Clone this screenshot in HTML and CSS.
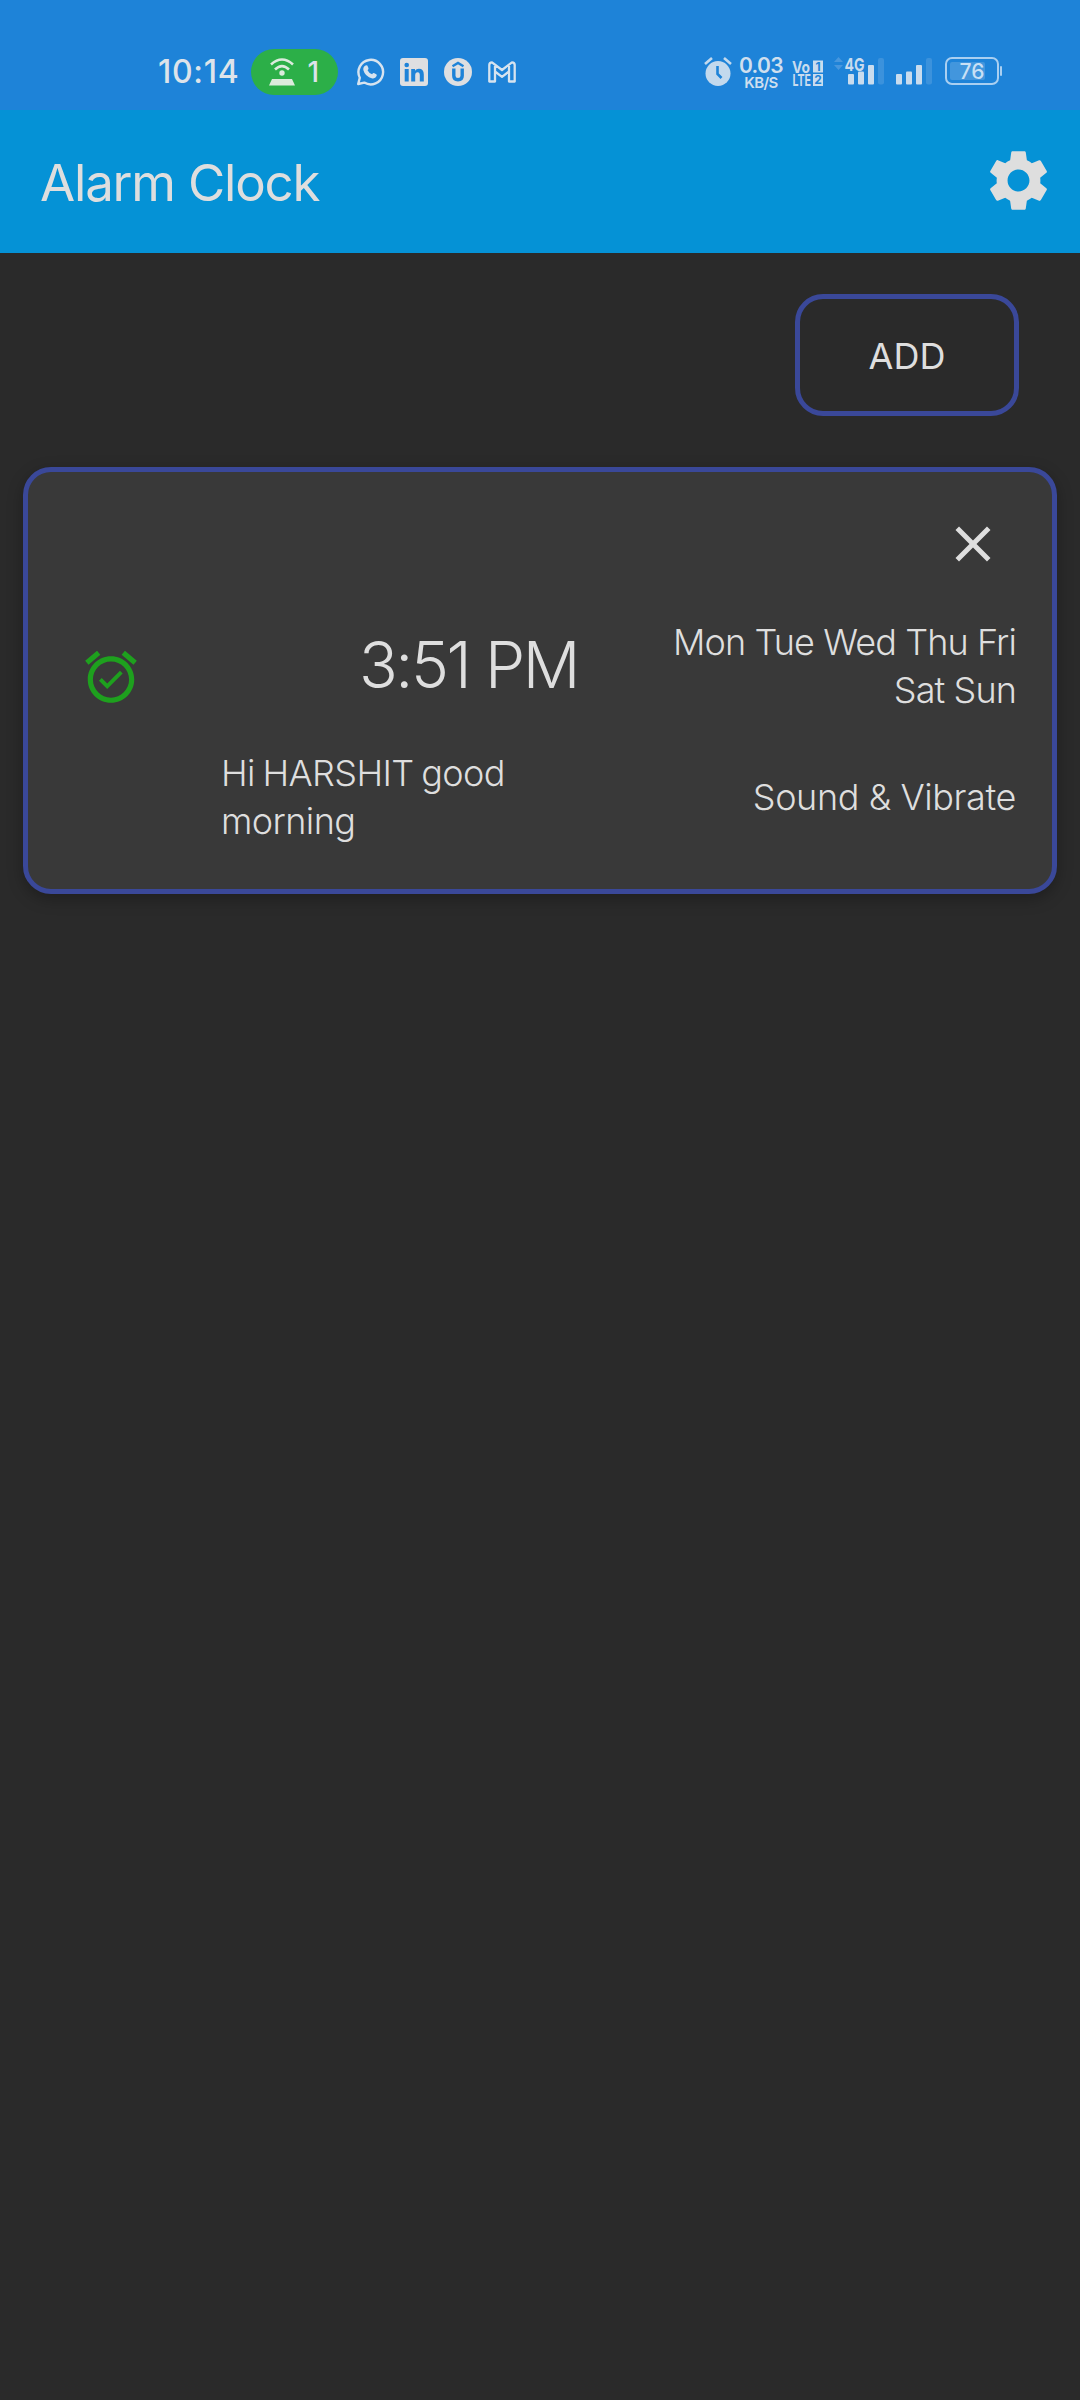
FILE: index.html
```html
<!DOCTYPE html>
<html lang="en">
<head>
<meta charset="utf-8">
<title>Alarm Clock</title>
<link rel="stylesheet" href="styles.css">
</head>
<body>
<div class="status">
  <span class="clock">10:14</span>
  <div class="hotspot">
    <svg width="26" height="28" viewBox="0 0 26 28" fill="none" stroke="#dcebdd" stroke-width="2.6"><path d="M2 6.5Q13-3.5 24 6.5M6 11.5Q13 4.8 20 11.5"/><circle cx="13" cy="15" r="2.7" fill="#dcebdd" stroke="none"/><path d="M3 21h20l3 6.500H0z" fill="#dcebdd" stroke="none"/></svg>
    <span>1</span>
  </div>
  <div class="apps">
    <svg width="28" height="28" viewBox="0 0 28 28"><path d="M2.2 26l1.6-6.3A12.3 12.3 0 1 1 8.300 24.600z" fill="none" stroke="#d6e3ef" stroke-width="2.4" stroke-linejoin="round"/><path d="M9.500 7.500q1.800-.7 2.300.9l.7 1.800q.2.900-1 2 1.500 2.900 4.600 4.100 1-1.500 1.800-1.200l2.400 1.200q.8.500.3 1.800-1.200 2.800-4.300 2.300-7.200-1.800-9-8.500-.3-3.300 2.200-4.400z" fill="#d6e3ef"/></svg>
    <svg width="28" height="28" viewBox="0 0 28 28"><rect width="28" height="28" rx="3" fill="#dedfe1"/><g fill="#1e83d8"><circle cx="6.700" cy="7" r="2.300"/><path d="M4.700 11h4v12.500h-4zM11.200 11H15v1.700q1.200-2 3.900-2 4.900 0 4.900 5.800v7h-4v-6.300q0-3-2.100-3-2.500 0-2.500 3v6.300h-4z"/></g></svg>
    <svg width="28" height="28" viewBox="0 0 28 28"><circle cx="14" cy="14" r="14" fill="#dedfe1"/><path d="M8.500 8.200L14 5l5.500 3.200" fill="none" stroke="#1e83d8" stroke-width="2.400"/><path d="M9.800 10.500v7.300q0 4 4.200 4t4.200-4v-7.300" fill="none" stroke="#1e83d8" stroke-width="3.400"/></svg>
    <svg width="28" height="22" viewBox="0 0 28 22"><path d="M1.300 20.500V4Q1.300 1.300 4 1.300L14 9l10-7.700q2.700 0 2.700 2.700v16.500H21V10.500L14 15.800 7 10.500v10zM7 10.500V5M21 10.500V5" fill="none" stroke="#d6e3ef" stroke-width="2.300" stroke-linejoin="round"/></svg>
  </div>
  <div class="system">
    <svg class="alarm-set" width="28" height="30" viewBox="0 0 28 30"><circle cx="14" cy="17.500" r="12.500" fill="#c3d9ed"/><path d="M1 8L8 2M27 8L20 2" stroke="#c3d9ed" stroke-width="2.600"/><path d="M13.500 10v8l4 4" fill="none" stroke="#1e83d8" stroke-width="2.600"/></svg>
    <div class="speed"><b>0.03</b><span>KB/S</span></div>
    <svg class="volte" width="32" height="28" viewBox="0 0 32 28"><text x="0" y="12.500" textLength="18" lengthAdjust="spacingAndGlyphs">Vo</text><text x="0.500" y="26" textLength="18.500" lengthAdjust="spacingAndGlyphs">LTE</text><path d="M21 0.500h10v12H21zM21 14h10v12H21z"/><text x="26" y="10.800" class="slot" text-anchor="middle">1</text><text x="26" y="24.300" class="slot" text-anchor="middle">2</text></svg>
    <svg class="cell" width="52" height="30" viewBox="0 0 52 30"><path d="M0 6l4.500-5L9 6zM0 9h9l-4.500 5z" fill="#4797de"/><text x="10.500" y="14.500" class="net" textLength="20" lengthAdjust="spacingAndGlyphs">4G</text><g fill="#c9dcee"><rect x="14" y="18" width="6" height="10.500" rx="1"/><rect x="24" y="15.500" width="6" height="13" rx="1"/><rect x="34" y="9" width="6" height="19.500" rx="1"/></g><rect x="44" y="2" width="6" height="26.500" rx="2" fill="#3b92dc"/></svg>
    <svg class="cell2" width="38" height="30" viewBox="0 0 38 30"><g fill="#c9dcee"><rect x="0" y="18" width="6" height="10.500" rx="1"/><rect x="10" y="15.500" width="6" height="13" rx="1"/><rect x="20" y="9" width="6" height="19.500" rx="1"/></g><rect x="30" y="2" width="6" height="26.500" rx="2" fill="#3b92dc"/></svg>
    <svg class="battery" width="58" height="28" viewBox="0 0 58 28"><rect x="1" y="1" width="52" height="26" rx="6" fill="none" stroke="#a9cff1" stroke-width="2"/><rect x="5" y="5" width="35" height="18" rx="2" fill="#4296dd"/><rect x="55" y="9" width="2" height="10" rx="1" fill="#a9cff1"/><text x="27" y="21.500" class="level" text-anchor="middle">76</text></svg>
  </div>
</div>
<header class="appbar">
  <h1>Alarm Clock</h1>
  <svg width="73" height="73" viewBox="0 0 24 24" fill="#dedede"><path d="M19.140 12.940c.04-.3.060-.61.060-.94 0-.32-.02-.64-.07-.94l2.030-1.580c.18-.14.230-.41.120-.61l-1.920-3.320c-.12-.22-.37-.29-.59-.22l-2.390.96c-.5-.38-1.030-.7-1.620-.94l-.36-2.540c-.04-.24-.24-.41-.48-.41h-3.840c-.24 0-.43.170-.47.410l-.36 2.540c-.59.240-1.130.570-1.620.940l-2.390-.96c-.22-.08-.47 0-.59.220L2.740 8.870c-.12.210-.08.470.12.610l2.030 1.580c-.05.300-.09.630-.09.940s.020.640.070.940l-2.030 1.580c-.18.140-.23.410-.12.610l1.920 3.320c.12.220.370.290.590.220l2.390-.96c.5.380 1.030.700 1.620.940l.36 2.540c.05.240.240.410.480.410h3.840c.24 0 .44-.17.470-.41l.36-2.540c.59-.24 1.130-.56 1.620-.94l2.390.96c.22.080.470 0 .59-.22l1.920-3.320c.12-.22.070-.47-.12-.61l-2.010-1.580zM12 15.600c-1.980 0-3.600-1.620-3.600-3.600s1.620-3.600 3.600-3.600 3.600 1.620 3.600 3.600-1.620 3.600-3.600 3.600z"/></svg>
</header>
<main>
  <button class="add">ADD</button>
  <section class="card">
    <svg class="close" width="60" height="60" viewBox="0 0 24 24" fill="#dedede"><path d="M19 6.410L17.590 5 12 10.590 6.410 5 5 6.410 10.590 12 5 17.590 6.410 19 12 13.410 17.590 19 19 17.590 13.410 12z"/></svg>
    <svg class="on" width="62" height="62" viewBox="0 0 24 24" fill="#1ea01e"><path d="M22 5.720l-4.600-3.860-1.290 1.530 4.600 3.860L22 5.720zM7.880 3.390L6.600 1.860 2 5.710l1.290 1.530 4.590-3.850zM12 4c-4.970 0-9 4.030-9 9s4.020 9 9 9c4.970 0 9-4.030 9-9s-4.030-9-9-9zm0 16c-3.870 0-7-3.130-7-7s3.130-7 7-7 7 3.130 7 7-3.130 7-7 7zm-1.460-5.470L8.410 12.400l-1.060 1.060 3.180 3.180 6-6-1.060-1.060-4.930 4.950z"/></svg>
    <div class="time">3:51 PM</div>
    <div class="days">Mon Tue Wed Thu Fri<br>Sat Sun</div>
    <div class="message">Hi HARSHIT good morning</div>
    <div class="mode">Sound &amp; Vibrate</div>
  </section>
</main>
</body>
</html>
```
FILE: styles.css
```css
* { box-sizing: border-box; }
body {
  margin: 0;
  min-height: 2400px;
  background: #2a2a2a;
  color: #dedede;
  font-family: Inter, "Noto Sans", sans-serif;
  font-weight: 300;
  white-space: nowrap;
}
svg { display: block; flex: none; overflow: visible; }

.status {
  height: 110px;
  padding: 34px 77px 0 158px;
  display: flex;
  align-items: flex-start;
  background: #1e83d8;
  color: #dde3ea;
}
.clock {
  width: 93px;
  line-height: 77px;
  margin-top: -1px;
  font-size: 32px;
  font-weight: 500;
  letter-spacing: 0.7px;
}
.hotspot {
  width: 87px;
  height: 46px;
  margin-top: 15px;
  padding: 0 19px 0 18px;
  border-radius: 23px;
  background: #2caf48;
  display: flex;
  align-items: center;
  justify-content: space-between;
  font-size: 28px;
  font-weight: 500;
}
.apps {
  height: 28px;
  margin: 24px 0 0 18px;
  display: flex;
  align-items: center;
  gap: 16px;
}
.system {
  margin: 22px 0 0 auto;
  display: flex;
  align-items: flex-start;
}
.speed {
  width: 44px;
  margin: 0 0 0 7px;
  display: flex;
  flex-direction: column;
  align-items: center;
  color: #cfdfee;
}
.speed b { font-size: 21px; line-height: 20px; font-weight: 600; letter-spacing: -0.6px; }
.speed span { font-size: 15px; line-height: 13px; font-weight: 600; letter-spacing: -0.6px; }
.volte {
  margin: 4px 0 0 9px;
  font-size: 16.5px;
  font-weight: 700;
  fill: #c9dcee;
}
.slot { font-size: 12px; fill: #1e83d8; }
.net { font-size: 18px; font-weight: 700; fill: #c9dcee; }
.level { font-size: 21px; font-weight: 500; fill: #c9e0f5; }
.cell { margin-left: 10px; }
.cell2 { margin-left: 10px; }
.battery { margin: 1px 0 0 11px; }

.appbar {
  height: 143px;
  padding: 0 25px 3px 40px;
  display: flex;
  align-items: center;
  justify-content: space-between;
  background: #0592d6;
}
h1 {
  margin: 6px 0 0;
  font-size: 51px;
  font-weight: 400;
  line-height: 60px;
  letter-spacing: -1.2px;
}
main { padding: 41px 23px 0; display: flex; flex-direction: column; }
.add {
  align-self: flex-end;
  width: 224px;
  height: 122px;
  margin-right: 38px;
  padding: 1px 0 0;
  border: 5px solid #3a4899;
  border-radius: 28px;
  background: none;
  color: inherit;
  font: 400 36px Inter, "Noto Sans", sans-serif;
  letter-spacing: 0;
}
.card {
  height: 427px;
  margin-top: 51px;
  padding: 42px 36px 0 53px;
  border: 5px solid #3a4899;
  border-radius: 28px;
  background: #393939;
  box-shadow: 0 5px 16px rgba(0, 0, 0, 0.28);
  display: grid;
  grid-template-columns: 142px 354px 1fr;
  grid-template-rows: 104px 96px 96px;
  row-gap: 0;
  font-size: 36px;
  line-height: 48px;
}
.close { grid-column: 1 / -1; justify-self: end; margin-right: 13px; }
.time {
  align-self: center;
  justify-self: end;
  margin: -2px -1px 0 0;
  font-size: 64px;
  line-height: 76px;
  letter-spacing: -2.4px;
}
.on { align-self: center; margin: 22px 0 0 -1px; }
.days { text-align: right; letter-spacing: -0.9px; }
.message {
  grid-column: 2;
  margin: 35px 0 0 -2px;
  white-space: normal;
  letter-spacing: -0.6px;
  word-spacing: -2px;
}
.mode { margin-top: 59px; text-align: right; letter-spacing: -0.4px; }
```
